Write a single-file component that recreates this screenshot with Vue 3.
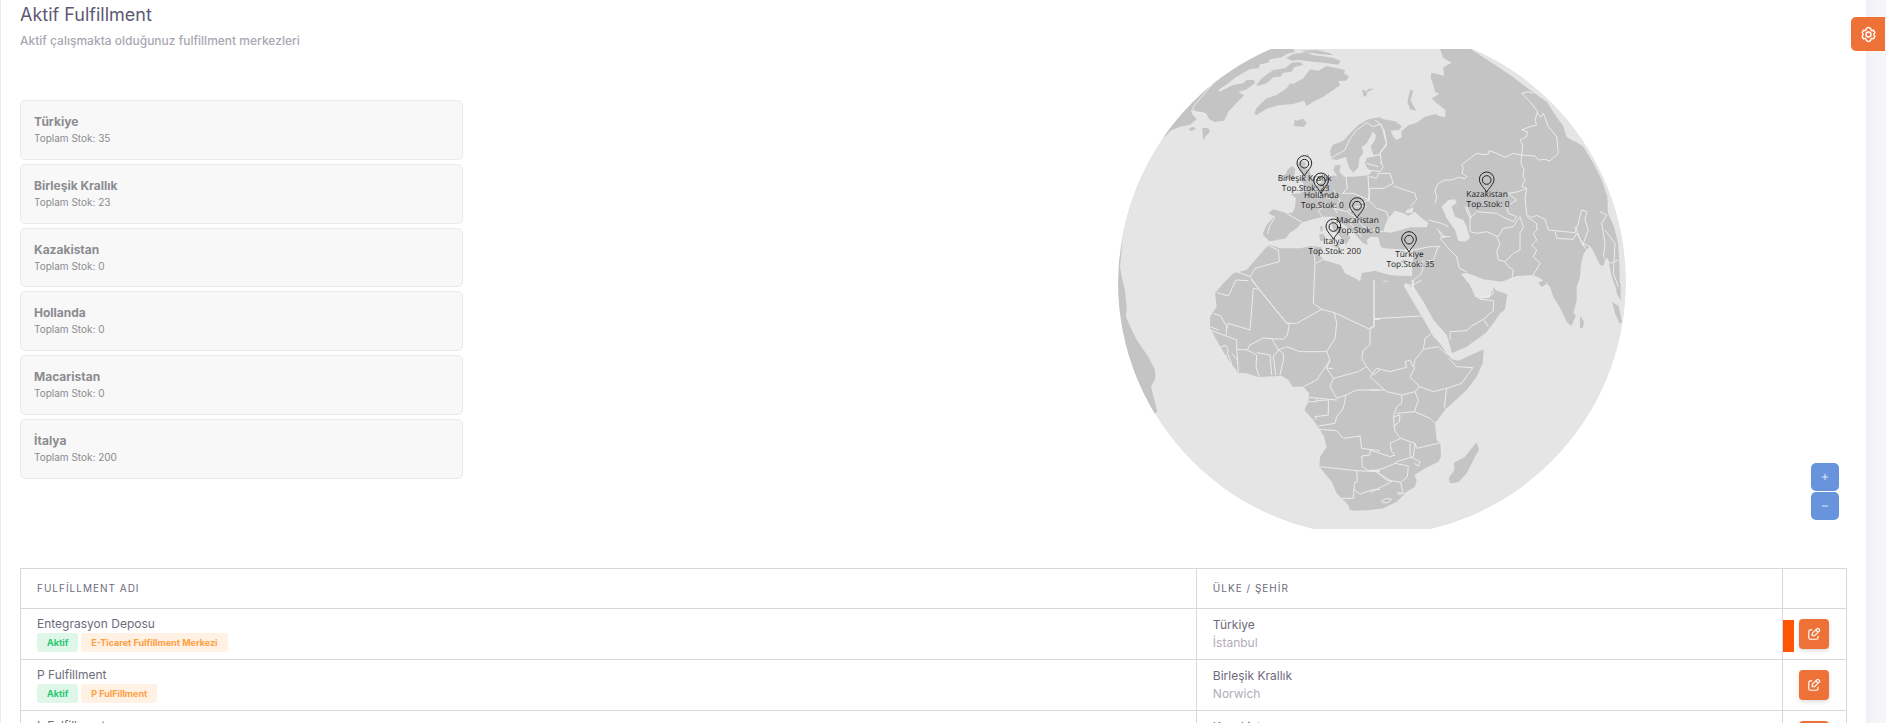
<script setup>
const centers = [
  { name: 'Türkiye', stock: 35 },
  { name: 'Birleşik Krallık', stock: 23 },
  { name: 'Kazakistan', stock: 0 },
  { name: 'Hollanda', stock: 0 },
  { name: 'Macaristan', stock: 0 },
  { name: 'İtalya', stock: 200 }
]

const pins = [
  { name: 'Birleşik Krallık', stock: 23, x: 613, y: 438 },
  { name: 'Hollanda', stock: 0, x: 663, y: 490 },
  { name: 'Macaristan', stock: 0, x: 771, y: 564 },
  { name: 'İtalya', stock: 200, x: 700, y: 628 },
  { name: 'Türkiye', stock: 35, x: 927, y: 666 },
  { name: 'Kazakistan', stock: 0, x: 1160, y: 487 }
]

const rows = [
  { name: 'Entegrasyon Deposu', type: 'E-Ticaret Fulfillment Merkezi', country: 'Türkiye', city: 'İstanbul', flag: true },
  { name: 'P Fulfillment', type: 'P FulFillment', country: 'Birleşik Krallık', city: 'Norwich', flag: false },
  { name: 'L Fulfillment', type: '', country: 'Kazakistan', city: '', flag: false }
]
</script>

<template>
  <div class="page">
    <main class="panel">
      <section class="overview">
        <div class="intro">
          <h1>Aktif Fulfillment</h1>
          <p class="subtitle">Aktif çalışmakta olduğunuz fulfillment merkezleri</p>
          <ul class="centers">
            <li v-for="c in centers" :key="c.name">
              <strong>{{ c.name }}</strong>
              <span>Toplam Stok: {{ c.stock }}</span>
            </li>
          </ul>
        </div>
        <div class="map">
          <svg class="globe" viewBox="0 57 1632 1440" role="img" aria-label="Fulfillment haritası">
            <defs>
              <clipPath id="sphere"><circle cx="816" cy="756" r="762" /></clipPath>
            </defs>
            <g clip-path="url(#sphere)">
              <circle class="sea" cx="816" cy="756" r="762" />
              <g class="land">
                <path d="M150 350L197 317L215 300L240 290L270 284L290 268L278 254L272 240L300 246L318 250L328 268L345 276L372 272L385 245L410 218L432 196L415 186L440 178L465 160L462 150L440 150L430 160L400 165L385 172L360 185L355 180L385 160L405 143L430 128L450 117L475 115L480 103L505 98L510 88L545 82L560 72L585 66L575 40L400 40L150 200Z" />
                <path d="M307 293L325 295L330 305L318 318L310 330L308 312ZM265 297L280 290L288 297L274 304Z" />
                <path d="M468 168L480 150L498 135L520 120L555 115L575 98L600 96L610 104L582 112L575 125L550 128L540 140L520 142L500 160L480 166Z" />
                <path d="M558 84L580 72L620 66L640 76L680 80L700 84L722 92L715 104L670 98L640 96L600 90L575 92ZM600 62L650 60L690 70L700 76L655 72Z" />
                <path d="M463 252L468 236L478 225L500 205L530 195L560 175L570 160L580 162L610 145L630 118L655 122L680 108L735 120L732 130L747 140L738 152L715 153L720 165L700 180L670 200L640 215L620 228L612 212L580 222L540 225L500 236L470 255Z" />
                <path d="M582 268L590 272L610 266L620 278L612 290L580 288L584 278ZM786 178L798 184L806 176L822 176L802 186L798 200L790 198ZM620 372L628 374L624 380Z" />
                <path d="M562 420L575 408L586 416L582 440L562 450L554 440ZM592 404L604 392L618 400L612 414L628 420L634 440L648 460L642 474L600 480L612 462L600 450L608 432L598 424Z" />
                <path d="M690 362L698 345L730 332L750 310L775 285L805 268L840 262L850 268L885 274L905 288L898 300L872 302L880 320L890 330L905 322L904 304L925 286L950 278L975 260L1008 252L1015 258L1036 262L1036 240L1008 218L995 205L1018 192L1005 185L1000 165L992 145L994 128L1020 134L1032 138L1030 112L1055 98L1030 84L1020 57L1112 57L1190 108L1232 136L1290 180L1340 215L1372 265L1392 290L1400 320L1420 330L1450 350L1480 400L1505 450L1522 500L1524 550L1542 590L1554 640L1558 700L1560 780L1548 775L1535 740L1524 685L1515 690L1510 708L1500 705L1478 660L1470 648L1452 668L1443 700L1440 740L1430 770L1430 812L1420 850L1428 856L1414 888L1402 878L1380 834L1360 800L1350 770L1340 758L1320 745L1300 735L1250 738L1205 755L1150 748L1100 728L1083 732L1110 765L1125 800L1145 806L1170 803L1178 770L1190 782L1222 793L1214 840L1200 850L1187 870L1158 908L1100 950L1056 970L1040 915L1000 870L970 815L935 760L935 660L850 655L815 648L790 640L752 600L700 560L668 560L630 570L605 578L590 595L568 610L558 625L530 630L507 634L488 612L500 585L520 562L505 548L520 538L560 550L578 548L585 530L588 505L572 492L600 490L620 480L650 466L680 448L700 436L712 440L700 420L706 405L722 406L718 425L732 440L760 440L805 436L815 425L802 415L795 400L800 384L830 378L848 374L820 374L812 350L825 330L828 316L818 305L810 322L800 340L785 352L790 368L778 385L775 412L760 428L748 415L742 395L738 380L710 390L694 386Z" />
                <path d="M510 645L540 655L600 655L635 648L665 652L658 674L672 690L720 700L735 730L765 745L780 753L785 728L825 722L870 735L935 738L935 770L910 765L930 800L975 875L1000 920L1020 938L1040 970L1055 988L1075 992L1135 965L1151 958L1148 1000L1130 1040L1100 1080L1035 1140L1005 1180L1010 1230L1021 1240L1023 1280L1015 1295L975 1315L943 1335L950 1350L945 1370L920 1385L890 1415L850 1435L810 1440L760 1442L748 1438L745 1425L710 1390L695 1355L658 1310L660 1280L680 1250L672 1220L660 1200L640 1170L613 1140L625 1115L627 1090L610 1070L578 1070L565 1050L545 1037L475 1042L440 1030L415 1028L385 990L355 940L330 895L330 860L350 830L345 790L370 760L400 730L440 720L470 685L500 650Z" />
                <path d="M68 620L64 670L60 710L66 745L74 775L80 830L78 860L88 885L110 930L145 980L165 1020L166 1045L153 1070L172 1145L150 1160L30 1000L54 780L56 700Z" />
                <path d="M1130 1237L1137 1260L1125 1280L1100 1330L1075 1357L1050 1360L1046 1345L1063 1320L1062 1298L1095 1280L1115 1255ZM1440 858L1452 875L1448 895L1440 895ZM1536 815L1556 828L1566 878L1558 880L1545 850ZM1545 740L1562 760L1562 812L1550 790ZM1314 758L1332 750L1340 762L1325 770Z" />
                <path d="M930 180L940 182L932 210L940 228L950 242L930 238L922 215Z" />
              </g>
              <g class="sea">
                <path d="M700 560L715 570L735 590L765 612L775 635L790 652L806 655L800 630L812 620L835 622L842 650L862 660L900 662L938 655L936 738L870 735L825 722L785 728L780 753L720 705L672 690L658 674L668 650L718 656L750 635L730 602L705 585L690 570Z" />
                <path d="M850 605L855 585L865 565L885 542L910 550L925 558L945 545L960 560L985 578L980 592L930 592L890 604L870 608ZM915 550L920 540L940 532L938 548Z" />
                <path d="M1025 530L1045 510L1065 508L1070 518L1055 530L1065 560L1090 570L1100 590L1110 625L1095 635L1075 632L1065 600L1040 565Z" />
                <path d="M985 205L1004 216L1028 234L1036 256L1020 258L1016 242L995 225Z" />
                <path d="M913 764L918 758L948 785L970 815L1000 870L1040 915L1053 962L1034 960L1015 935L1000 915L990 890L960 850L935 800Z" />
                <path d="M1388 285L1408 300L1440 340L1418 332L1400 320ZM846 752L866 752L856 756Z" />
              </g>
              <g class="land">
                <path d="M660 590L668 588L668 602L662 606ZM658 612L672 612L670 632L660 632ZM692 568L712 584L734 604L752 622L738 644L722 622L700 600ZM695 646L720 642L716 656ZM900 694L918 688L910 700Z" />
              </g>
              <g class="borders">
                <path d="M372 128L340 160L278 232L285 248L310 248L318 262L302 270L290 284M514 556L524 562L508 590L502 612M560 550L608 578M508 648L535 660L538 695L500 705L465 715L450 740L410 725M450 740L475 775L560 880L590 880L665 838L640 820L645 700L640 650M645 700L668 690M385 798L408 750L445 752M352 788L385 798M668 560L655 545L675 520L700 530L712 550M642 470L660 500L690 505M738 440L742 475L728 490L760 490L808 510M700 480L720 512L700 535L740 545L760 530L800 530M804 436L808 510L780 520M760 530L745 550L765 560L790 590L815 596M765 560L750 580L785 620" />
                <path d="M692 385L735 360L748 330L770 300L800 278L820 290M820 290L840 282L852 300L860 340L835 375M800 400L835 410M800 420L840 425L850 410L840 395M808 440L830 445L835 430L870 430L880 460L850 475L810 475L805 510L830 535L860 545L865 565M880 468L945 490L950 510L930 530M810 596L850 605" />
              </g>
              <g class="borders" transform="translate(810)">
                <path d="M15 270L35 285L50 345L30 370L35 400M175 570L215 580L235 590M200 595L225 620L210 625L240 660L260 680L268 715L290 725M205 600L215 620L240 620M210 650L180 650L130 660L125 700M205 648L190 690L135 700L160 715L150 735L130 750L130 780M195 520L200 502L195 480L205 460L225 450L245 450L265 442L285 446L290 440L276 430L280 415L275 405L300 385L320 370L340 374L355 372L358 362L380 370L405 382L430 370L455 375L453 400L462 420L458 440L465 450L455 470L470 475L465 505L468 530L470 555L485 562L500 556L525 568L535 600L615 608L625 580L635 540L650 545L645 570L655 600L640 640L660 650M455 375L458 345L450 330L470 320L472 305L455 300L480 290L500 285L495 270L503 245L480 215L455 190L475 185L490 190M455 375L495 378L505 390L525 388L540 393L565 370L560 320L535 290L520 250L512 262L500 245M285 530L300 565L320 545L380 550L400 562L430 575L440 560L415 550L410 530L440 510L415 490L445 485L470 475M300 565L300 605L320 610L350 605L385 620L400 595L430 590L450 560L460 590L450 610L450 660L430 670L405 695L385 690L380 665L390 640L380 620M405 695L415 710L430 720L425 750M470 560L500 580L500 600L490 610L500 630L485 645L500 660L490 680L510 700L490 735M555 605L560 625L610 628L620 610L650 660M615 590L640 650M690 545L710 555L695 580L705 640L700 680L720 700L745 690M705 600L735 640L730 730L745 770M290 530L305 565" />
              </g>
              <g class="borders" transform="translate(0 750)">
                <path d="M455 0L560 130L568 130L562 165L550 178L515 176L490 174L450 195L442 210L410 208L410 180L378 168L330 150M384 130L450 150L460 25L475 28M378 165L380 140L362 108L340 100M330 140L355 150M384 130L380 145M410 208L415 275M442 210L470 225L468 260L478 292M470 218L510 225L515 285M515 176L535 210L520 230L527 285M535 210L550 220L550 240L540 285M535 210L560 200L600 215L680 215L705 175L710 130L703 98L665 88M703 98L810 148L822 140L822 0M822 118L840 118M810 148L810 195L790 210L785 235L800 260L775 275L700 295L680 265L690 240L680 215M690 240L650 300L610 320M680 265L700 265M700 295L690 320L710 355L738 345L770 330L840 330M800 260L820 285L840 270M710 360L625 352M738 345L730 385L710 410L705 430L655 438M650 355L650 365L625 365M650 362L685 360L685 405L645 410L650 420M655 448L710 452L730 475L780 468L785 505L840 512M810 510L810 525L785 528L787 560L805 572L840 570M660 560L770 572L840 575M770 572L772 605L763 608L760 655L725 655M763 630L780 642L815 630L840 628M358 205L375 195L385 210L380 230L365 228ZM395 220L410 238M385 225L395 255" />
              </g>
              <g class="borders" transform="translate(810 750)">
                <path d="M12 0L12 140L0 143M12 116L155 108M127 0L127 15L105 15M130 15L155 0M240 155L290 152L305 138L340 118L370 92L370 62L330 58L318 45M340 118L355 140M365 15L370 40L355 50L330 48M240 155L240 180M185 160L165 175L160 208L205 200L230 222L245 220M160 208L135 240L130 262L120 240L105 245L110 262L60 275L20 265L0 290L50 335L95 345L135 335L148 320L120 290L135 262M148 320L190 335L230 325L275 310L308 263L260 260L235 235M230 325L223 380L230 390M0 330L45 330M95 345L95 370L80 380L70 410L75 455L92 475L60 490L65 515L75 525L60 530L0 510M135 335L145 360L133 395L80 400M133 395L180 415L195 430M70 410L90 405L88 425L70 440M92 475L135 490L140 505L212 488M135 490L130 530L80 545L75 550L115 558L112 590L92 607L50 600L15 572L0 570M75 550L40 565L15 572M15 572L65 605L0 638M92 607L98 635L90 645L82 638L105 640M120 490L120 530L150 545L145 558L132 550M35 662L50 655L65 658L55 668L38 668Z" />
              </g>
            </g>
            <g v-for="p in pins" :key="p.name" :transform="`translate(${p.x} ${p.y})`">
              <path class="pin" d="M0 0C-5 -12 -22 -24 -22 -39A22 22 0 0 1 22 -39C22 -24 5 -12 0 0Z" />
              <circle class="pin" cx="0" cy="-37" r="13" />
              <text class="label" x="1" y="14">{{ p.name }}</text>
              <text class="label" x="4" y="44">Top.Stok: {{ p.stock }}</text>
            </g>
          </svg>
          <div class="zoom">
            <button type="button" aria-label="Yakınlaştır"><svg viewBox="0 0 10 10"><path d="M5 1V9M1 5H9" /></svg></button>
            <button type="button" aria-label="Uzaklaştır"><svg viewBox="0 0 10 10"><path d="M1 5H9" /></svg></button>
          </div>
        </div>
      </section>

      <table>
        <colgroup><col class="c-name"><col class="c-place"><col class="c-act"></colgroup>
        <thead>
          <tr><th scope="col">FULFİLLMENT ADI</th><th scope="col">ÜLKE / ŞEHİR</th><td></td></tr>
        </thead>
        <tbody>
          <tr v-for="r in rows" :key="r.name">
            <td>
              <div class="line">{{ r.name }}</div>
              <div class="tags"><template v-if="r.type"><span class="tag ok">Aktif</span><span class="tag kind">{{ r.type }}</span></template></div>
            </td>
            <td>
              <div class="line">{{ r.country }}</div>
              <div class="line city">{{ r.city }}</div>
            </td>
            <td class="act">
              <span v-if="r.flag" class="flag"></span>
              <button type="button" class="edit" aria-label="Düzenle">
                <svg viewBox="0 0 24 24"><path d="M9 5H6a3 3 0 0 0-3 3v10a3 3 0 0 0 3 3h10a3 3 0 0 0 3-3v-3" /><path d="M9 15v-4l8-8a2 2 0 0 1 3 0l1 1a2 2 0 0 1 0 3l-8 8zM15 5l4 4" /></svg>
              </button>
            </td>
          </tr>
        </tbody>
      </table>
    </main>
    <button type="button" class="settings" aria-label="Ayarlar">
      <svg viewBox="0 0 24 24"><path d="M12 2l3 1.500 1 3 3-.5 2 3-1.500 3 1.500 3-2 3-3-.5-1 3-3 1.500-3-1.500-1-3-3 .5-2-3 1.500-3-1.500-3 2-3 3 .5 1-3z" /><circle cx="12" cy="12" r="3.500" /></svg>
    </button>
  </div>
</template>

<style>
body {
  margin: 0;
}
</style>

<style scoped>
.page {
  position: relative;
  box-sizing: border-box;
  height: 100vh;
  overflow: hidden;
  padding: 0 20px 0 1px;
  background: linear-gradient(to left, #f7f7fa 0, #f5f5f8 12px, #efeff4 20px, #ebe9f1 100%);
  font-family: Inter, "Open Sans", sans-serif;
  color: #6e6b7b;
}
.panel {
  min-height: 100vh;
  padding: 0 19px;
  background: #fff;
}
.overview {
  display: grid;
  grid-template-columns: 48fr 52fr;
  height: 568px;
}
h1 {
  margin: 0;
  padding-top: 4px;
  font-size: 18px;
  line-height: 22px;
  font-weight: 400;
  color: #5e5873;
}
.subtitle {
  margin: 6px 0 0;
  font-size: 12px;
  line-height: 18px;
  font-weight: 500;
  color: #aaa7b3;
}
.centers {
  display: grid;
  grid-auto-rows: 1fr;
  gap: 4px;
  box-sizing: border-box;
  width: 50.5%;
  height: 379px;
  margin: 50px 0 0;
  padding: 0;
  list-style: none;
}
.centers li {
  display: flex;
  flex-direction: column;
  box-sizing: border-box;
  padding: 12px 13px;
  border: 1px solid #ebe9f1;
  border-radius: 5px;
  background: #f8f8f8;
  color: #8a8c90;
}
.centers strong {
  font-size: 12px;
  line-height: 17px;
  font-weight: 700;
}
.centers span {
  font-size: 10px;
  line-height: 16px;
}
.map {
  position: relative;
  padding-top: 49px;
}
.globe {
  display: block;
  width: 100%;
  height: 480px;
}
.sea {
  fill: #e5e5e5;
}
.land {
  fill: #c4c4c4;
}
.borders {
  fill: none;
  stroke: #ececec;
  stroke-width: 3;
  stroke-linejoin: round;
}
.pin {
  fill: none;
  stroke: #222;
  stroke-width: 3;
}
.label {
  font-family: "Open Sans", sans-serif;
  font-size: 25px;
  text-rendering: geometricPrecision;
  text-anchor: middle;
  fill: #222;
}
.zoom {
  position: absolute;
  right: 8px;
  top: 463px;
  display: grid;
  gap: 1px;
}
.zoom button {
  display: grid;
  place-items: center;
  width: 28px;
  height: 28px;
  padding: 0;
  border: 0;
  border-radius: 5px;
  background: #6794dc;
}
.zoom svg {
  width: 8px;
  height: 8px;
  fill: none;
  stroke: #fff;
}
table {
  width: 100%;
  table-layout: fixed;
  border-collapse: collapse;
}
.c-place {
  width: 32.1%;
}
.c-act {
  width: 64px;
}
th,
td {
  box-sizing: border-box;
  padding: 0 16px;
  border: 1px solid #d8d6de;
  text-align: left;
}
th {
  height: 40px;
  padding-bottom: 2px;
  font-size: 10px;
  font-weight: 400;
  letter-spacing: 1px;
}
tbody td {
  height: 51px;
  padding-bottom: 1px;
}
.line {
  height: 18px;
  font-size: 12px;
  line-height: 18px;
}
.city {
  color: #b0adb8;
}
.tags {
  display: flex;
  gap: 3px;
  height: 19px;
}
.tag {
  padding: 0 10px;
  border-radius: 3px;
  font-size: 9px;
  line-height: 19px;
  font-weight: 700;
}
.ok {
  background: #dff7e9;
  color: #28c76f;
}
.kind {
  background: #fff1e3;
  color: #ff9f43;
}
tbody .act {
  position: relative;
  padding-bottom: 0;
}
.flag {
  position: absolute;
  left: 0;
  top: 11px;
  width: 11px;
  height: 32px;
  background: #f50;
}
.edit {
  display: grid;
  place-items: center;
  width: 30px;
  height: 30px;
  padding: 0;
  border: 0;
  border-radius: 4px;
  background: #ee7137;
  box-shadow: 0 2px 4px #0002;
}
.edit svg {
  width: 14px;
  height: 14px;
  fill: none;
  stroke: #fff;
  stroke-width: 2;
}
.settings {
  position: absolute;
  right: 1px;
  top: 17px;
  display: grid;
  place-items: center;
  width: 34px;
  height: 34px;
  padding: 0;
  border: 0;
  border-radius: 5px 0 0 5px;
  background: #ee7137;
}
.settings svg {
  width: 17px;
  height: 17px;
  fill: none;
  stroke: #fff;
  stroke-width: 2;
  stroke-linejoin: round;
}
</style>
